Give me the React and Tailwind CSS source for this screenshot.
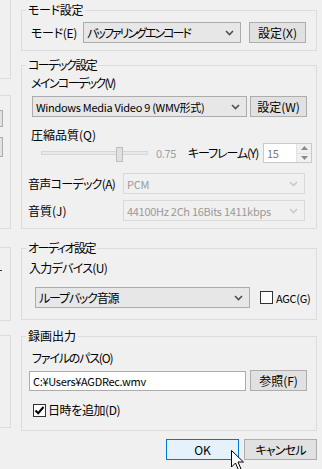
import React from 'react';

// latin-heavy strings: a touch smaller and tighter, Meiryo UI's latin is condensed
const LAT = 'text-[11px] tracking-[-0.3px]';

const Chevron = ({ disabled }) => (
  <svg width="9" height="6" viewBox="0 0 9 6">
    <path d="M1 1 L4.5 4.5 L8 1" fill="none" stroke={disabled ? '#c8c8c8' : '#505050'} strokeWidth="1.6" />
  </svg>
);

const Combo = ({ text, width, disabled, track = '' }) => (
  <div
    className={`flex items-center justify-between h-[21px] pl-[3px] pr-[6px] border ${
      disabled ? 'border-[#d9d9d9] bg-[#f0f0f0] text-[#9a9a9a]' : 'border-[#acacac] bg-[#e7e7e7] text-black'
    } ${width}`}
  >
    <span className={`whitespace-nowrap ${track}`}>{text}</span>
    <Chevron disabled={disabled} />
  </div>
);

const Btn = ({ children, primary, className = '' }) => (
  <div
    className={`flex items-center justify-center h-[21px] border ${
      primary ? 'border-[#0078d7] bg-[#e5f1fb]' : 'border-[#adadad] bg-[#e1e1e1]'
    } ${className}`}
  >
    {children}
  </div>
);

const Group = ({ title, track = '', className = '', children }) => (
  <fieldset className={`border border-[#dcdcdc] p-0 ${className}`}>
    <legend className={`ml-[4px] px-[2px] leading-[16px] ${track}`}>{title}</legend>
    {children}
  </fieldset>
);

const CheckBox = ({ checked }) => (
  <div className="w-[13px] h-[13px] border border-[#333] bg-white flex items-center justify-center">
    {checked && (
      <svg width="11" height="11" viewBox="0 0 11 11">
        <path d="M1.5 5.5 L4.2 8.2 L9.5 2" fill="none" stroke="#000" strokeWidth="2" />
      </svg>
    )}
  </div>
);

const Spin = () => (
  <div className="flex w-[49px] h-[20px] border border-[#c9c9c9] bg-white">
    <div className={`flex-1 pl-[3px] text-[#7a7a7a] leading-[18px] ${LAT}`}>15</div>
    <div className="w-[15px] flex flex-col border-l border-[#e3e3e3] bg-[#f0f0f0]">
      <div className="flex-1 flex items-center justify-center border-b border-[#e3e3e3]">
        <svg width="7" height="4" viewBox="0 0 7 4"><path d="M0 4 L3.5 0 L7 4 Z" fill="#8a8a8a" /></svg>
      </div>
      <div className="flex-1 flex items-center justify-center">
        <svg width="7" height="4" viewBox="0 0 7 4"><path d="M0 0 L3.5 4 L7 0 Z" fill="#8a8a8a" /></svg>
      </div>
    </div>
  </div>
);

const Cursor = () => (
  <svg className="absolute left-[231px] top-[450px]" width="14" height="22" viewBox="0 0 14 22">
    <path
      d="M0.5 0.5 L0.5 17 L4.5 13 L7.5 20 L10 19 L7 12 L12.5 12 Z"
      fill="#fff"
      stroke="#000"
      strokeWidth="1"
    />
  </svg>
);

export default function App() {
  return (
    <div className="relative w-[322px] h-[469px] overflow-hidden bg-[#f0f0f0] text-[12px] text-black leading-[16px] [font-family:'Noto_Sans_CJK_JP',sans-serif] [font-feature-settings:'palt']">
      <div className="flex">
        {/* left panel, cut off */}
        <div className="w-[11px] shrink-0 flex flex-col">
          <div className="h-[79px] border-r border-b border-[#dcdcdc]" />
          <div className="mt-[16px] h-[134px] border-t border-r border-b border-[#dcdcdc] flex flex-col">
            <div className="mt-[14px] w-[3px] h-[17px] border-t border-r border-b border-[#adadad] bg-[#e1e1e1]" />
            <div className="mt-[10px] w-[3px] h-[20px] border-t border-r border-b border-[#adadad] bg-[#e1e1e1]" />
          </div>
          <div className="mt-[18px] h-[74px] border-t border-r border-b border-[#dcdcdc] flex flex-col">
            <div className="mt-[22px] w-[2px] h-[1px] bg-[#333]" />
          </div>
          <div className="mt-[14px] h-[93px] border-t border-r border-b border-[#dcdcdc]" />
        </div>

        {/* right panel */}
        <div className="ml-[10px] w-[296px] flex flex-col">
          <Group title="モード設定" track="tracking-[-0.3px]" className="mt-[2px]">
            <div className="flex items-center pt-[4px] pb-[7px] pl-[9px]">
              <span className="w-[52px] tracking-[-0.3px]">モード(E)</span>
              <Combo text="バッファリングエンコード" width="w-[158px]" track="tracking-[-2px]" />
              <Btn className="ml-[8px] w-[57px]">設定(X)</Btn>
            </div>
          </Group>

          <Group title="コーデック設定" track="tracking-[-1.5px]" className="mt-[6px]">
            <div className="flex flex-col pt-[2px] pb-[7px] pl-[9px]">
              <span className="tracking-[-1.6px]">メインコーデック(V)</span>
              <div className="flex items-center mt-[5px] ml-[1px]">
                <Combo text="Windows Media Video 9 (WMV形式)" width="w-[215px]" track={LAT} />
                <Btn className="ml-[3px] w-[57px]">設定(W)</Btn>
              </div>
              <span className="mt-[10px]">圧縮品質(Q)</span>
              <div className="flex items-center h-[20px]">
                <div className="relative ml-[10px] w-[107px] h-[20px] flex items-center">
                  <div className="w-full h-[4px] bg-[#e7eaea] border border-[#d6d6d6]" />
                  <div className="absolute left-[75px] top-[4px] w-[7px] h-[15px] bg-[#e0e0e0] border border-[#bdbdbd]" />
                </div>
                <span className={`ml-[8px] w-[28px] text-[#a0a0a0] ${LAT}`}>0.75</span>
                <span className="ml-[4px] w-[72px] whitespace-nowrap tracking-[-1.1px]">キーフレーム(Y)</span>
                <div className="ml-[3px]">
                  <Spin />
                </div>
              </div>
              <div className="flex items-center mt-[10px] -ml-[3px]">
                <span className="w-[95px] whitespace-nowrap tracking-[-0.7px]">音声コーデック(A)</span>
                <Combo text="PCM" width="w-[182px]" disabled track={LAT} />
              </div>
              <div className="flex items-center mt-[6px] -ml-[3px]">
                <span className="w-[95px]">音質(J)</span>
                <Combo text="44100Hz 2Ch 16Bits 1411kbps" width="w-[182px]" disabled track={LAT} />
              </div>
            </div>
          </Group>

          <Group title="オーディオ設定" track="tracking-[-1.5px]" className="mt-[11px]">
            <div className="flex flex-col pt-[4px] pb-[11px] pl-[7px]">
              <span className="tracking-[-0.7px]">入力デバイス(U)</span>
              <div className="flex items-center mt-[11px] ml-[6px]">
                <Combo text="ループバック音源" width="w-[215px]" track="tracking-[-1.2px]" />
                <div className="ml-[10px]">
                  <CheckBox />
                </div>
                <span className={`ml-[3px] ${LAT}`}>AGC(G)</span>
              </div>
            </div>
          </Group>

          <Group title="録画出力" className="mt-[8px]">
            <div className="flex flex-col pt-[6px] pb-[12px] pl-[7px]">
              <span className="ml-[3px] tracking-[-1.2px]">ファイルのパス(O)</span>
              <div className="flex items-center mt-[4px]">
                <div className={`w-[217px] h-[20px] pl-[3px] border border-[#acacac] bg-white leading-[18px] ${LAT}`}>
                  C:¥Users¥AGDRec.wmv
                </div>
                <Btn className="ml-[4px] w-[57px] h-[20px]">参照(F)</Btn>
              </div>
              <div className="flex items-center mt-[11px] ml-[4px]">
                <CheckBox checked />
                <span className="ml-[2px] tracking-[-0.4px]">日時を追加(D)</span>
              </div>
            </div>
          </Group>

          <div className="flex justify-end mt-[8px] gap-[5px]">
            <Btn primary className="w-[73px]">OK</Btn>
            <Btn className="w-[73px] tracking-[-0.8px]">キャンセル</Btn>
          </div>
        </div>
      </div>
      <Cursor />
    </div>
  );
}
